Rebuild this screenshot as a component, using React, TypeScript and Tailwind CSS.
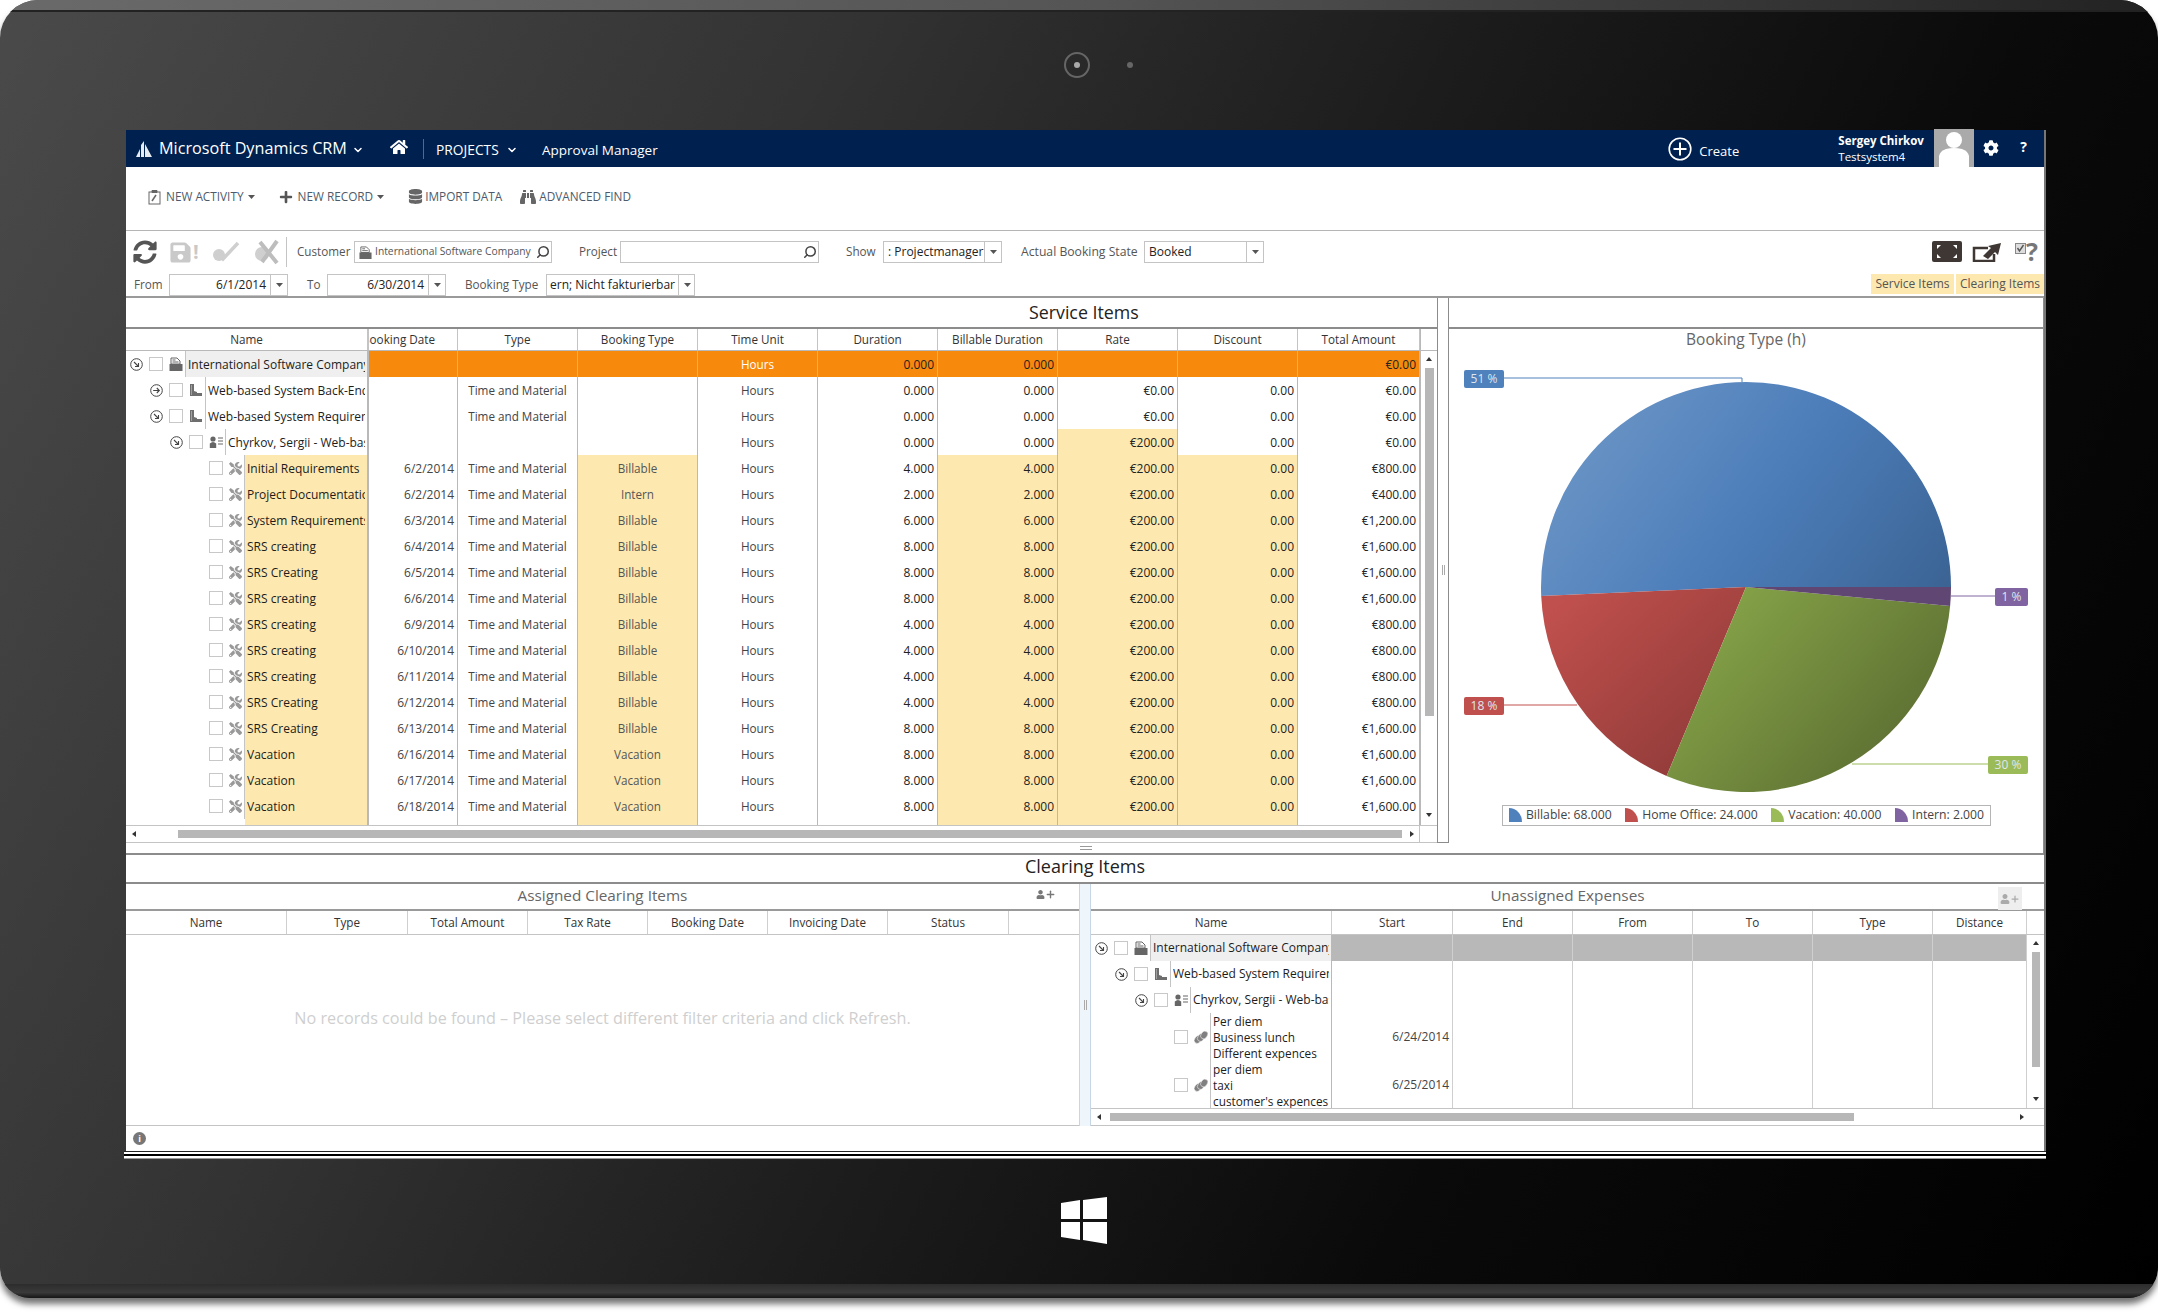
import React from 'react';
import { Search, ChevronDown, Plus } from 'lucide-react';
import { FaHome, FaCog, FaBinoculars, FaDatabase, FaSyncAlt, FaSave, FaTools, FaPlus, FaUser } from 'react-icons/fa';

const SERVICE_ROWS = [
  ['Initial Requirements', '6/2/2014', 'Billable', '4.000', '€800.00'],
  ['Project Documentation', '6/2/2014', 'Intern', '2.000', '€400.00'],
  ['System Requirements', '6/3/2014', 'Billable', '6.000', '€1,200.00'],
  ['SRS creating', '6/4/2014', 'Billable', '8.000', '€1,600.00'],
  ['SRS Creating', '6/5/2014', 'Billable', '8.000', '€1,600.00'],
  ['SRS creating', '6/6/2014', 'Billable', '8.000', '€1,600.00'],
  ['SRS creating', '6/9/2014', 'Billable', '4.000', '€800.00'],
  ['SRS creating', '6/10/2014', 'Billable', '4.000', '€800.00'],
  ['SRS creating', '6/11/2014', 'Billable', '4.000', '€800.00'],
  ['SRS Creating', '6/12/2014', 'Billable', '4.000', '€800.00'],
  ['SRS Creating', '6/13/2014', 'Billable', '8.000', '€1,600.00'],
  ['Vacation', '6/16/2014', 'Vacation', '8.000', '€1,600.00'],
  ['Vacation', '6/17/2014', 'Vacation', '8.000', '€1,600.00'],
  ['Vacation', '6/18/2014', 'Vacation', '8.000', '€1,600.00'],
];

const LEVELS = ['pl-[4px]', 'pl-[24px]', 'pl-[44px]', 'pl-[64px]'];
const YELLOW = 'bg-[#fde9b0]';

const Expander = ({ dir = 'down' }: { dir?: 'down' | 'right' }) => (
  <svg width="13" height="13" viewBox="0 0 13 13" className="shrink-0 mr-[6px]" fill="none" stroke="#444">
    <circle cx="6.5" cy="6.5" r="5.8" strokeWidth="1" />
    {dir === 'down' ? (
      <path d="M4 4l4.5 4.5M8.5 5v3.5H5" strokeWidth="1.1" />
    ) : (
      <path d="M3.2 6.5h6M6.8 4l2.5 2.5L6.8 9" strokeWidth="1.1" />
    )}
  </svg>
);

const CompanyIcon = ({ size = 14, className = '' }: { size?: number; className?: string }) => (
  <svg width={size} height={size} viewBox="0 0 14 14" className={`shrink-0 ${className}`}>
    <path d="M2 7V1h6l3 3v3z" fill="#fff" stroke="#666" />
    <path d="M3.5 3h3M3.5 5h6" stroke="#666" />
    <rect x="0.5" y="7" width="13" height="7" fill="#666" />
  </svg>
);

const RowIcon = ({ kind }: { kind: string }) => {
  if (kind === 'company') return <CompanyIcon className="ml-[6px]" />;
  if (kind === 'project')
    return (
      <svg width="14" height="14" viewBox="0 0 14 14" className="shrink-0 ml-[6px]">
        <path d="M1 1h4v7l3 1v1h5v3H1z" fill="#6e6e6e" />
        <path d="M2 2h1v10H2z" fill="#a0a0a0" />
      </svg>
    );
  if (kind === 'person')
    return (
      <svg width="14" height="14" viewBox="0 0 14 14" className="shrink-0 ml-[6px]">
        <circle cx="4" cy="4" r="2.6" fill="#666" />
        <path d="M0.8 13V8.5Q4 5.5 7.2 8.5V13z" fill="#666" />
        <path d="M9 3h5M9 6h5M9 9h5" stroke="#666" strokeWidth="1.2" />
      </svg>
    );
  if (kind === 'coins')
    return (
      <svg width="14" height="14" viewBox="0 0 14 14" className="shrink-0 ml-[6px]">
        <g fill="#808080" stroke="#fff" strokeWidth="0.5">
          <ellipse cx="3.8" cy="9.5" rx="3.2" ry="4.2" transform="rotate(35 3.8 9.5)" />
          <ellipse cx="7" cy="7.5" rx="3.2" ry="4.2" transform="rotate(35 7 7.5)" />
          <ellipse cx="10.2" cy="5" rx="3.2" ry="4.2" transform="rotate(35 10.2 5)" />
        </g>
      </svg>
    );
  return <FaTools size={13} color="#999" className="shrink-0 ml-[6px]" />;
};

const Check = () => <span className="shrink-0 w-[14px] h-[14px] border border-[#c8c8c8] bg-white" />;

// tree cell shared by the upper grid and the expenses grid
const TreeName = ({
  level, kind, label, bg = '', expander, lines, width,
}: {
  level: number; kind: string; label?: string; bg?: string; expander?: 'down' | 'right'; lines?: string[]; width: string;
}) => (
  <div className={`${width} ${LEVELS[level]} shrink-0 h-full flex items-center border-r border-[#b9b9b9] overflow-hidden`}>
    {expander ? <Expander dir={expander} /> : <span className="shrink-0 w-[19px]" />}
    <Check />
    <RowIcon kind={kind} />
    <div className={`ml-[2px] flex-1 min-w-0 h-full flex flex-col justify-center border-l border-[#c4c4c4] pl-[2px] pr-[2px] text-[12px] text-[#1c1c1c] whitespace-nowrap overflow-hidden ${bg}`}>
      {lines ? lines.map((l) => <span key={l} className="block h-[16px] leading-[16px] text-[11.8px]">{l}</span>) : <span className="block overflow-hidden">{label}</span>}
    </div>
  </div>
);

const ScrollArrow = ({ dir }: { dir: 'up' | 'down' | 'left' | 'right' }) => {
  const points = { up: '0,4 3,0 6,4', down: '0,0 6,0 3,4', left: '4,0 4,6 0,3', right: '0,0 4,3 0,6' }[dir];
  return (
    <svg width="6" height="6" viewBox="0 0 6 6" className="shrink-0">
      <polygon points={points} fill="#333" />
    </svg>
  );
};

const Caret = () => (
  <svg width="7" height="4" viewBox="0 0 7 4" className="shrink-0">
    <polygon points="0,0 7,0 3.5,4" fill="#555" />
  </svg>
);

const Select = ({ width, text, align = 'left' }: { width: string; text: string; align?: 'left' | 'right' }) => (
  <div className={`${width} shrink-0 h-[22px] flex items-center border border-[#c4c4c4] bg-white overflow-hidden`}>
    <span className={`flex-1 min-w-0 px-[4px] text-[12px] whitespace-nowrap overflow-hidden text-[#222] ${align === 'right' ? 'text-right' : ''}`}>{text}</span>
    <span className="w-[17px] shrink-0 h-full flex items-center justify-center border-l border-[#c4c4c4]"><Caret /></span>
  </div>
);

const Lookup = ({ width, children }: { width: string; children?: React.ReactNode }) => (
  <div className={`${width} shrink-0 h-[22px] flex items-center border border-[#c4c4c4] bg-white overflow-hidden pl-[4px] pr-[1px]`}>
    <div className="flex-1 min-w-0 flex items-center gap-[3px] whitespace-nowrap overflow-hidden text-[#555]">{children}</div>
    <Search size={14} strokeWidth={2.6} color="#444" className="shrink-0 -scale-x-100" />
  </div>
);

const RibbonItem = ({ icon, text, caret, className }: { icon: React.ReactNode; text: string; caret?: boolean; className: string }) => (
  <div className={`flex items-center text-[#4d5a6b] text-[11.8px] ${className}`}>
    {icon}
    <span>{text}</span>
    {caret && <span className="ml-[4px]"><Caret /></span>}
  </div>
);

const PieLegend = ({ color, text }: { color: string; text: string }) => (
  <div className="flex items-center gap-[4px]">
    <svg width="13" height="14" viewBox="0 0 13 14">
      <path d="M0 14V0A13 14 0 0 1 13 14z" fill={color} />
    </svg>
    <span className="text-[#444] text-[12.2px]">{text}</span>
  </div>
);

const BookingChart = () => (
  <svg width="595" height="452" viewBox="1450 353 595 452" className="block">
    <defs>
      <linearGradient id="blue" gradientUnits="userSpaceOnUse" x1="1580" y1="420" x2="1930" y2="680">
        <stop offset="0" stopColor="#6a94c6" />
        <stop offset="0.45" stopColor="#4c7db9" />
        <stop offset="1" stopColor="#385f8d" />
      </linearGradient>
      <linearGradient id="red" gradientUnits="userSpaceOnUse" x1="1560" y1="600" x2="1720" y2="770">
        <stop offset="0" stopColor="#c0504d" />
        <stop offset="1" stopColor="#8e3a38" />
      </linearGradient>
      <linearGradient id="green" gradientUnits="userSpaceOnUse" x1="1720" y1="600" x2="1900" y2="760">
        <stop offset="0" stopColor="#85a348" />
        <stop offset="1" stopColor="#5d6f32" />
      </linearGradient>
    </defs>
    <path d="M1747 587L1542.2 596A205 205 0 0 1 1747 382A205 205 0 0 1 1952 587z" fill="url(#blue)" />
    <path d="M1747 587L1667.6 776A205 205 0 0 1 1542.2 596z" fill="url(#red)" />
    <path d="M1747 587L1951.1 606A205 205 0 0 1 1667.6 776z" fill="url(#green)" />
    <path d="M1747 587L1952 587A205 205 0 0 1 1951.1 606z" fill="#604673" />
    <path d="M1504 378H1743V382" fill="none" stroke="#4f81bd" />
    <path d="M1504 705H1578" fill="none" stroke="#c0504d" />
    <path d="M1853 764H1989" fill="none" stroke="#9bbb59" />
    <path d="M1952 596H1996" fill="none" stroke="#8064a2" />
    <rect x="1465" y="370" width="40" height="18" rx="2" fill="#4f81bd" />
    <rect x="1465" y="697" width="40" height="18" rx="2" fill="#c0504d" />
    <rect x="1989" y="756" width="40" height="18" rx="2" fill="#9bbb59" />
    <rect x="1996" y="588" width="33" height="18" rx="2" fill="#8064a2" />
    <g fontSize="12" fill="#dfe6ee" textAnchor="middle" fontFamily="'Open Sans',sans-serif">
      <text x="1485" y="383">51 %</text>
      <text x="1485" y="710">18 %</text>
      <text x="2009" y="769">30 %</text>
      <text x="2012.5" y="601">1 %</text>
    </g>
  </svg>
);

const HEAD = 'h-full flex items-center justify-center border-r border-[#c4c4c4] text-[#333] shrink-0';
const CELL = 'h-full flex items-center pt-[1px] border-r border-[#b9b9b9] shrink-0 whitespace-nowrap';
const NUM = 'justify-end pr-[3px] text-[12px] text-[#222]';

const ServiceTreeRow = ({
  level, kind, label, expander, nameBg = '', type = '', unitWhite, values, rateBg = '', bg = '',
}: {
  level: number; kind: string; label: string; expander: 'down' | 'right'; nameBg?: string; type?: string; unitWhite?: boolean;
  values: string[]; rateBg?: string; bg?: string;
}) => (
  <div className="h-[26px] shrink-0 flex text-[#333]">
    <TreeName level={level} kind={kind} label={label} expander={expander} bg={`pt-[1px] ${nameBg}`} width="w-[242px]" />
    <div className={`w-[90px] ${CELL} border-l ${bg}`} />
    <div className={`w-[120px] ${CELL} justify-center text-[#444] ${bg}`}>{type}</div>
    <div className={`w-[120px] ${CELL} justify-center ${bg}`} />
    <div className={`w-[120px] ${CELL} justify-center ${unitWhite ? 'text-white' : 'text-[#444]'} ${bg}`}>Hours</div>
    <div className={`w-[120px] ${CELL} ${NUM} ${bg}`}>{values[0]}</div>
    <div className={`w-[120px] ${CELL} ${NUM} ${bg}`}>{values[1]}</div>
    <div className={`w-[120px] ${CELL} ${NUM} ${bg} ${rateBg}`}>{values[2]}</div>
    <div className={`w-[120px] ${CELL} ${NUM} ${bg}`}>{values[3]}</div>
    <div className={`w-[122px] ${CELL} ${NUM} ${bg}`}>{values[4]}</div>
  </div>
);

const ServiceItems = () => (
  <div className="w-[1311px] shrink-0 flex flex-col">
    <div className="h-[29px] flex items-center pl-[903px] pb-[1px] text-[17.8px] text-[#222]">Service Items</div>
    <div className="flex h-[498px] border-t-2 border-[#8c8c8c]">
      <div className="w-[1294px] shrink-0 flex flex-col overflow-hidden">
        <div className="h-[22px] shrink-0 flex border-b border-[#b9b9b9]">
          <div className={`w-[242px] ${HEAD}`}>Name</div>
          <div className={`w-[90px] ${HEAD} border-l justify-end! pr-[22px] overflow-hidden whitespace-nowrap`}>Booking Date</div>
          <div className={`w-[120px] ${HEAD}`}>Type</div>
          <div className={`w-[120px] ${HEAD}`}>Booking Type</div>
          <div className={`w-[120px] ${HEAD}`}>Time Unit</div>
          <div className={`w-[120px] ${HEAD}`}>Duration</div>
          <div className={`w-[120px] ${HEAD}`}>Billable Duration</div>
          <div className={`w-[120px] ${HEAD}`}>Rate</div>
          <div className={`w-[120px] ${HEAD}`}>Discount</div>
          <div className={`w-[122px] ${HEAD}`}>Total Amount</div>
        </div>
        <ServiceTreeRow level={0} kind="company" label="International Software Company" expander="down" nameBg="bg-[#efefef]" unitWhite bg="bg-[#f78a0c]" values={['0.000', '0.000', '', '', '€0.00']} />
        <ServiceTreeRow level={1} kind="project" label="Web-based System Back-End" expander="right" type="Time and Material" values={['0.000', '0.000', '€0.00', '0.00', '€0.00']} />
        <ServiceTreeRow level={1} kind="project" label="Web-based System Requirements" expander="down" type="Time and Material" values={['0.000', '0.000', '€0.00', '0.00', '€0.00']} />
        <ServiceTreeRow level={2} kind="person" label="Chyrkov, Sergii - Web-based System" expander="down" rateBg={YELLOW} values={['0.000', '0.000', '€200.00', '0.00', '€0.00']} />
        {SERVICE_ROWS.map(([name, date, booking, duration, total], i) => (
          <div key={i} className="h-[26px] shrink-0 flex text-[#333]">
            <TreeName level={3} kind="task" label={name} bg={`pt-[1px] ${YELLOW}`} width="w-[242px]" />
            <div className={`w-[90px] ${CELL} border-l justify-end pr-[3px] text-[12px] text-[#444]`}>{date}</div>
            <div className={`w-[120px] ${CELL} justify-center text-[#444]`}>Time and Material</div>
            <div className={`w-[120px] ${CELL} justify-center text-[#555] ${YELLOW}`}>{booking}</div>
            <div className={`w-[120px] ${CELL} justify-center text-[#444]`}>Hours</div>
            <div className={`w-[120px] ${CELL} ${NUM}`}>{duration}</div>
            <div className={`w-[120px] ${CELL} ${NUM} ${YELLOW}`}>{duration}</div>
            <div className={`w-[120px] ${CELL} ${NUM} ${YELLOW}`}>€200.00</div>
            <div className={`w-[120px] ${CELL} ${NUM} ${YELLOW}`}>0.00</div>
            <div className={`w-[122px] ${CELL} ${NUM}`}>{total}</div>
          </div>
        ))}
        <div className="h-[6px] shrink-0 flex">
          <div className="w-[242px] shrink-0 h-full border-r border-[#b9b9b9] pl-[119px]"><div className={`h-full ${YELLOW}`} /></div>
          <div className={`w-[90px] ${CELL} border-l`} />
          <div className={`w-[120px] ${CELL}`} />
          <div className={`w-[120px] ${CELL} ${YELLOW}`} />
          <div className={`w-[120px] ${CELL}`} />
          <div className={`w-[120px] ${CELL}`} />
          <div className={`w-[120px] ${CELL} ${YELLOW}`} />
          <div className={`w-[120px] ${CELL} ${YELLOW}`} />
          <div className={`w-[120px] ${CELL} ${YELLOW}`} />
          <div className={`w-[122px] ${CELL}`} />
        </div>
      </div>
      <div className="w-[17px] shrink-0 flex flex-col items-center border-l border-[#b9b9b9]">
        <div className="h-[22px] w-full shrink-0 border-b border-[#b9b9b9]" />
        <div className="h-[17px] shrink-0 flex items-center"><ScrollArrow dir="up" /></div>
        <div className="w-[9px] h-[348px] shrink-0 bg-[#b7b7b7]" />
        <div className="flex-1" />
        <div className="h-[18px] shrink-0 flex items-center"><ScrollArrow dir="down" /></div>
      </div>
    </div>
    <div className="h-[18px] flex items-center border-y border-[#c4c4c4]">
      <span className="ml-[6px]"><ScrollArrow dir="left" /></span>
      <div className="ml-[40px] w-[1224px] h-[8px] bg-[#b7b7b7]" />
      <span className="ml-[8px]"><ScrollArrow dir="right" /></span>
      <div className="ml-auto w-[18px] h-full border-l border-[#c4c4c4]" />
    </div>
    <div className="flex-1 flex flex-col items-start justify-center gap-[2px] pl-[954px]">
      <span className="w-[12px] h-px bg-[#999]" />
      <span className="w-[12px] h-px bg-[#999]" />
    </div>
  </div>
);

const LOWER_LEFT_COLS: [string, string][] = [
  ['w-[161px]', 'Name'], ['w-[121px]', 'Type'], ['w-[120px]', 'Total Amount'], ['w-[120px]', 'Tax Rate'],
  ['w-[120px]', 'Booking Date'], ['w-[120px]', 'Invoicing Date'], ['w-[121px]', 'Status'],
];
const LOWER_RIGHT_COLS: [string, string][] = [
  ['w-[241px]', 'Name'], ['w-[121px]', 'Start'], ['w-[120px]', 'End'], ['w-[120px]', 'From'],
  ['w-[120px]', 'To'], ['w-[120px]', 'Type'], ['w-[94px]', 'Distance'],
];
const GRID_LINE = 'h-full shrink-0 border-r border-[#cfcfcf]';
const EMPTY_COLS = ['w-[120px]', 'w-[120px]', 'w-[120px]', 'w-[120px]', 'w-[94px]'];

const ExpenseRow = ({ height, date, children, bg = '' }: { height: string; date?: string; children: React.ReactNode; bg?: string }) => (
  <div className={`${height} shrink-0 flex`}>
    {children}
    <div className={`w-[121px] ${GRID_LINE} flex items-center justify-end pr-[3px] text-[12px] text-[#444] ${bg}`}>{date}</div>
    {EMPTY_COLS.map((w, i) => <div key={i} className={`${w} ${GRID_LINE} ${bg}`} />)}
  </div>
);

const PanelTitle = ({ text, children }: { text: string; children?: React.ReactNode }) => (
  <div className="h-[27px] shrink-0 flex items-center justify-center pb-[3px] border-b-2 border-[#9a9a9a] text-[15.3px] text-[#666] relative">
    {text}
    {children}
  </div>
);

export default function App() {
  return (
    <div className="w-[2158px] h-[1312px] bg-white overflow-hidden font-['Open_Sans',sans-serif] text-[11.7px]">
      <div className="w-[2158px] h-[1298px] rounded-t-[38px] rounded-b-[30px] overflow-hidden flex flex-col bg-[linear-gradient(118deg,#4a4a4a_0%,#333_30%,#1c1c1c_52%,#0a0a0a_72%,#000_100%)] shadow-[0_6px_6px_rgba(0,0,0,0.55)]">
        {/* top bezel with camera */}
        <div className="h-[130px] shrink-0 flex flex-col">
          <div className="h-[12px] shrink-0 bg-[linear-gradient(to_right,#6a6a6a,#555_50%,#222)] border-b-2 border-[#222]" />
          <div className="flex-1 flex items-center pl-[1064px] pb-[12px]">
            <div className="w-[26px] h-[26px] rounded-full border-2 border-[#666] blur-[0.6px] flex items-center justify-center">
              <div className="w-[6px] h-[6px] rounded-full bg-[#aaa]" />
            </div>
            <div className="ml-[37px] w-[6px] h-[6px] rounded-full bg-[#666] blur-[0.6px]" />
          </div>
        </div>

        {/* screen */}
        <div className="ml-[126px] w-[1920px] shrink-0 flex flex-col bg-white border-r-2 border-[#777]">
          <div className="h-[37px] shrink-0 bg-[#002050] text-white flex items-center">
            <svg width="17" height="16" viewBox="0 0 17 16" className="ml-[10px]">
              <path d="M0 16L4 8V16zM5 16V4L8 0V16zM9 16V3L16 16z" fill="#e6ebf3" />
            </svg>
            <span className="ml-[6px] w-[189px] shrink-0 text-[16.2px] whitespace-nowrap">Microsoft Dynamics CRM</span>
            <ChevronDown size={12} strokeWidth={3} className="ml-[4px] mt-[3px]" />
            <FaHome size={18} className="ml-[26px] -mt-[3px]" />
            <div className="ml-[15px] w-px h-[20px] bg-[#4d6a92]" />
            <span className="ml-[12px] w-[64px] shrink-0 text-[13.8px] mt-[3px] whitespace-nowrap">PROJECTS</span>
            <ChevronDown size={12} strokeWidth={3} className="ml-[6px] mt-[3px]" />
            <span className="ml-[24px] text-[13.5px] mt-[3px] whitespace-nowrap">Approval Manager</span>
            <div className="ml-auto flex items-center h-full">
              <svg width="24" height="24" viewBox="0 0 24 24" fill="none" stroke="#fff" strokeWidth="1.6">
                <circle cx="12" cy="12" r="10.8" />
                <path d="M12 5.5v13M5.5 12h13" strokeWidth="2" />
              </svg>
              <span className="ml-[7px] w-[40px] text-[13px] mt-[6px]">Create</span>
              <div className="ml-[99px] w-[96px] flex flex-col leading-[16px] text-[11.5px]">
                <span className="font-bold">Sergey Chirkov</span>
                <span>Testsystem4</span>
              </div>
              <svg width="40" height="38" viewBox="0 0 40 38" className="-mt-[1px]">
                <rect width="40" height="38" fill="#aaa" />
                <circle cx="20" cy="11" r="8" fill="#fff" />
                <path d="M5 38V27Q6 22 12 20Q20 18 28 20Q34 22 35 27V38z" fill="#fff" />
              </svg>
              <FaCog size={16} className="ml-[9px] -mt-[2px]" />
              <span className="ml-[21px] mr-[17px] text-[14px] font-bold -mt-[4px]">?</span>
            </div>
          </div>

          {/* ribbon */}
          <div className="h-[64px] shrink-0 flex items-center border-b border-[#b5b5b5] pb-[4px]">
            <RibbonItem className="ml-[22px]" text="NEW ACTIVITY" caret icon={
              <svg width="13" height="16" viewBox="0 0 13 16" className="mr-[5px]" fill="none" stroke="#666"><rect x="1" y="3" width="11" height="12" /><path d="M4 1.5h5v2H4z" fill="#666" /><path d="M4 12l4-6" strokeWidth="1.5" /></svg>
            } />
            <RibbonItem className="ml-[24px]" text="NEW RECORD" caret icon={<FaPlus size={14} color="#555" className="mr-[5px]" />} />
            <RibbonItem className="ml-[24px]" text="IMPORT DATA" icon={<FaDatabase size={15} color="#666" className="mr-[2px]" />} />
            <RibbonItem className="ml-[18px]" text="ADVANCED FIND" icon={<FaBinoculars size={16} color="#666" className="mr-[3px]" />} />
          </div>

          {/* filter bar */}
          <div className="h-[67px] shrink-0 flex justify-between border-b-2 border-[#9a9a9a] text-[#555]">
            <div className="pt-[8px] flex flex-col gap-[8px]">
              <div className="h-[26px] flex items-center">
                <FaSyncAlt size={24} color="#555" className="ml-[7px]" />
                <span className="ml-[12px] w-[31px] flex items-center">
                  <FaSave size={23} color="#c9c9c9" />
                  <span className="ml-[1px] text-[#c9c9c9] font-bold text-[20px] leading-none">!</span>
                </span>
                <svg width="30" height="24" viewBox="0 0 30 24" className="ml-[10px]">
                  <circle cx="9" cy="15" r="6" fill="#cfcfcf" />
                  <path d="M8 14l5 5L28 3" fill="none" stroke="#cfcfcf" strokeWidth="3.5" />
                </svg>
                <svg width="28" height="26" viewBox="0 0 28 26" className="ml-[12px]">
                  <circle cx="10" cy="15" r="7" fill="#cfcfcf" />
                  <path d="M10 23L25 2M8 3l17 21" fill="none" stroke="#bdbdbd" strokeWidth="4" />
                </svg>
                <div className="ml-[6px] w-px h-[30px] bg-[#c4c4c4]" />
                <span className="ml-[10px] w-[57px]">Customer</span>
                <Lookup width="w-[198px]">
                  <CompanyIcon size={13} />
                  <span className="text-[10.3px]">International Software Company</span>
                </Lookup>
                <span className="ml-[27px] w-[41px]">Project</span>
                <Lookup width="w-[199px]" />
                <span className="ml-[27px] w-[37px]">Show</span>
                <Select width="w-[119px]" text=": Projectmanager" />
                <span className="ml-[19px] w-[123px] text-[12.2px] whitespace-nowrap">Actual Booking State</span>
                <Select width="w-[120px]" text="Booked" />
              </div>
              <div className="h-[26px] flex items-center">
                <span className="ml-[8px] w-[35px]">From</span>
                <Select width="w-[119px]" text="6/1/2014" align="right" />
                <span className="ml-[19px] w-[20px]">To</span>
                <Select width="w-[119px]" text="6/30/2014" align="right" />
                <span className="ml-[19px] w-[81px]">Booking Type</span>
                <div className="w-[149px] shrink-0 h-[22px] flex items-center border border-[#c4c4c4] overflow-hidden">
                  <span className="w-[131px] shrink-0 pl-[3px] text-[12px] overflow-hidden whitespace-nowrap text-[#222]">ern; Nicht fakturierbar</span>
                  <span className="w-[17px] shrink-0 h-full flex items-center justify-center border-l border-[#c4c4c4]"><Caret /></span>
                </div>
              </div>
            </div>
            <div className="pt-[8px] flex flex-col items-end gap-[7px]">
              <div className="h-[26px] flex items-center pr-[6px]">
                <svg width="30" height="21" viewBox="0 0 30 21">
                  <rect width="30" height="21" rx="2" fill="#3f3733" />
                  <path d="M5 4h4L5 8zM25 4h-4l4 4zM5 17h4L5 13zM25 17h-4l4-4z" fill="#fff" />
                </svg>
                <svg width="30" height="20" viewBox="0 0 30 20" className="ml-[10px]">
                  <path d="M16 6H2v13h20v-7" fill="none" stroke="#3f3733" strokeWidth="2.5" />
                  <path d="M11 14l8-8-3-2 13-3-3 12-3-3-7 7z" fill="#3f3733" />
                </svg>
                <svg width="11" height="11" viewBox="0 0 11 11" className="ml-[13px] -mt-[6px]">
                  <rect x="0.5" y="0.5" width="10" height="10" fill="#ddd" stroke="#888" />
                  <path d="M2.5 5l2 3 4-6" fill="none" stroke="#555" strokeWidth="1.4" />
                </svg>
                <span className="text-[25px] leading-none font-bold text-[#777]">?</span>
              </div>
              <div className="h-[26px] flex items-center gap-[2px] text-[12px] text-[#555]">
                <span className="w-[83px] h-[20px] flex items-center justify-center bg-[#fde9b0] whitespace-nowrap">Service Items</span>
                <span className="w-[88px] h-[20px] flex items-center justify-center bg-[#fde9b0] whitespace-nowrap">Clearing Items</span>
              </div>
            </div>
          </div>

          {/* service items and chart */}
          <div className="h-[555px] shrink-0 flex">
            <ServiceItems />
            <div className="w-[12px] h-[545px] shrink-0 flex items-center justify-center gap-[1px] border-x border-b border-[#8c8c8c]">
              <span className="w-px h-[10px] bg-[#aaa]" />
              <span className="w-px h-[10px] bg-[#aaa]" />
            </div>
            <div className="flex-1 min-w-0 flex flex-col border-r border-[#8c8c8c]">
              <div className="h-[29px] shrink-0" />
              <div className="flex-1 min-h-0 border-t-2 border-[#8c8c8c]">
                <div className="h-[24px] flex items-center justify-center pb-[3px] text-[15.5px] text-[#666]">Booking Type (h)</div>
                <BookingChart />
                <div className="ml-[53px] w-[489px] h-[21px] flex items-center justify-between px-[6px] border border-[#b5b5b5]">
                  <PieLegend color="#4f81bd" text="Billable: 68.000" />
                  <PieLegend color="#c0504d" text="Home Office: 24.000" />
                  <PieLegend color="#9bbb59" text="Vacation: 40.000" />
                  <PieLegend color="#8064a2" text="Intern: 2.000" />
                </div>
              </div>
            </div>
          </div>

          {/* clearing items */}
          <div className="h-[31px] shrink-0 flex items-center justify-center pb-[4px] border-y-2 border-[#8c8c8c] text-[18px] text-[#222]">Clearing Items</div>
          <div className="h-[242px] shrink-0 flex">
            <div className="w-[953px] shrink-0 flex flex-col border-b border-[#c4c4c4]">
              <PanelTitle text="Assigned Clearing Items">
                <span className="absolute right-[23px] top-[5px] flex items-center text-[#777]">
                  <FaUser size={9} />
                  <Plus size={11} strokeWidth={3} />
                </span>
              </PanelTitle>
              <div className="h-[24px] shrink-0 flex border-b border-[#c4c4c4] text-[#333]">
                {LOWER_LEFT_COLS.map(([w, t]) => (
                  <div key={t} className={`${w} h-full shrink-0 flex items-center justify-center border-r border-[#cfcfcf]`}>{t}</div>
                ))}
              </div>
              <div className="flex-1 flex items-center justify-center pb-[24px] text-[16.2px] text-[#cfcfcf]">
                No records could be found – Please select different filter criteria and click Refresh.
              </div>
            </div>
            <div className="w-[12px] shrink-0 flex items-center justify-center gap-[1px] bg-[#eef5fb] border-x border-[#c6d6e4]">
              <span className="w-px h-[10px] bg-[#aaa]" />
              <span className="w-px h-[10px] bg-[#aaa]" />
            </div>
            <div className="flex-1 min-w-0 flex flex-col border-b border-[#c4c4c4]">
              <PanelTitle text="Unassigned Expenses">
                <span className="absolute right-[22px] top-[3px] w-[24px] h-[23px] flex items-center justify-center bg-[#eee] text-[#aaa]">
                  <FaUser size={10} />
                  <Plus size={10} strokeWidth={3} />
                </span>
              </PanelTitle>
              <div className="h-[24px] shrink-0 flex border-b border-[#c4c4c4] text-[#333]">
                {LOWER_RIGHT_COLS.map(([w, t]) => (
                  <div key={t} className={`${w} h-full shrink-0 flex items-center justify-center border-r border-[#cfcfcf]`}>{t}</div>
                ))}
              </div>
              <div className="flex-1 min-h-0 flex">
                <div className="w-[936px] shrink-0 flex flex-col">
                  <ExpenseRow height="h-[26px]" bg="bg-[#b8b8b8]">
                    <TreeName level={0} kind="company" label="International Software Company" expander="down" bg="bg-[#efefef]" width="w-[241px]" />
                  </ExpenseRow>
                  <ExpenseRow height="h-[26px]">
                    <TreeName level={1} kind="project" label="Web-based System Requirements" expander="down" width="w-[241px]" />
                  </ExpenseRow>
                  <ExpenseRow height="h-[26px]">
                    <TreeName level={2} kind="person" label="Chyrkov, Sergii - Web-based System" expander="down" width="w-[241px]" />
                  </ExpenseRow>
                  <ExpenseRow height="h-[48px]" date="6/24/2014">
                    <TreeName level={3} kind="coins" lines={['Per diem', 'Business lunch', 'Different expences']} width="w-[241px]" />
                  </ExpenseRow>
                  <ExpenseRow height="h-[48px]" date="6/25/2014">
                    <TreeName level={3} kind="coins" lines={['per diem', 'taxi', "customer's expences"]} width="w-[241px]" />
                  </ExpenseRow>
                </div>
                <div className="flex-1 flex flex-col items-center">
                  <div className="h-[17px] shrink-0 flex items-center"><ScrollArrow dir="up" /></div>
                  <div className="w-[8px] h-[115px] shrink-0 bg-[#b7b7b7]" />
                  <div className="flex-1" />
                  <div className="h-[17px] shrink-0 flex items-center"><ScrollArrow dir="down" /></div>
                </div>
              </div>
              <div className="h-[17px] shrink-0 flex items-center border-t border-[#c4c4c4]">
                <span className="ml-[6px]"><ScrollArrow dir="left" /></span>
                <div className="ml-[7px] w-[744px] h-[8px] bg-[#b7b7b7]" />
                <span className="ml-[166px]"><ScrollArrow dir="right" /></span>
              </div>
            </div>
          </div>
          <div className="h-[25px] shrink-0 flex items-center pl-[7px] bg-white">
            <span className="w-[13px] h-[13px] rounded-full bg-[#777] flex items-center justify-center text-white text-[9px] font-bold leading-none">i</span>
          </div>
        </div>

        {/* stacked edge under the screen */}
        <div className="ml-[124px] w-[1922px] shrink-0 flex flex-col">
          <div className="h-px bg-[#222]" />
          <div className="h-[2px] bg-white" />
          <div className="h-[2px] bg-black" />
          <div className="h-[2px] bg-white" />
          <div className="h-px bg-[#999]" />
        </div>

        {/* windows key */}
        <div className="flex-1 min-h-0 flex flex-col">
          <svg width="46" height="47" viewBox="1061 1198 46 47" className="ml-[1061px] mt-[38px] shrink-0">
            <path d="M1061 1204L1080 1201V1220H1061zM1083 1201L1107 1198V1220H1083zM1061 1223H1080V1241L1061 1238zM1083 1223H1107V1245L1083 1241z" fill="#fff" />
          </svg>
          <div className="mt-auto h-[14px] shrink-0 bg-[linear-gradient(to_bottom,#2c2c2c,#3a3a3a_60%,#161616)]" />
        </div>
      </div>
    </div>
  );
}
